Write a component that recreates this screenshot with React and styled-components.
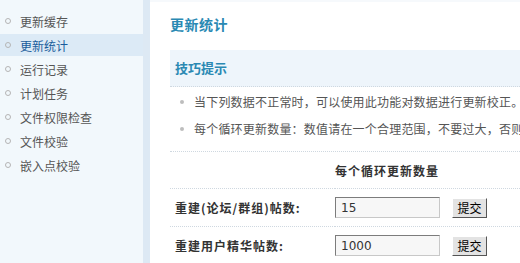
import React from 'react';
import styled, { createGlobalStyle } from 'styled-components';

const Global = createGlobalStyle`
  html, body {
    margin: 0;
    padding: 0;
    background: #fff;
    overflow: hidden;
  }
  body {
    font-family: "Noto Sans CJK SC", "DejaVu Sans", sans-serif;
    font-size: 12px;
    color: #555;
  }
`;

const Page = styled.div`
  display: flex;
  height: 263px;
  width: 520px;
  overflow: hidden;
`;

const Sidebar = styled.ul`
  flex: 0 0 143px;
  margin: 0;
  padding: 10px 0 0;
  list-style: none;
  background: #f2f8fc;
  border-right: 7px solid #dde9f4;
`;

const NavItem = styled.li`
  display: flex;
  align-items: center;
  height: 22px;
  margin-bottom: 2px;
  padding-left: 5px;
  background: ${p => (p.$active ? '#dceaf6' : 'transparent')};
  color: ${p => (p.$active ? '#1a5c9c' : '#555')};
  white-space: nowrap;

  &::before {
    content: '';
    width: 4px;
    height: 4px;
    border: 1px solid #b5b5b5;
    border-radius: 50%;
    margin-right: 9px;
  }
`;

const Main = styled.div`
  flex: 0 0 auto;
  width: 640px;
  padding: 14px 0 0 20px;
  background: #fff;
  border-top: 2px solid #f6f9fc;
`;

const Title = styled.h1`
  margin: -2px 0 16px;
  height: 20px;
  line-height: 20px;
  font-size: 14px;
  font-weight: bold;
  letter-spacing: 0.5px;
  color: #2a89b3;
`;

const TipsHead = styled.div`
  height: 36px;
  line-height: 36px;
  padding-left: 5px;
  background: #eef5fb;
  border-bottom: 1px dotted #cfd8e0;
  font-size: 13px;
  font-weight: bold;
  color: #2a89b3;
`;

const TipList = styled.ul`
  margin: 0;
  padding: 1px 0 9px;
  list-style: none;
  border-bottom: 1px dotted #cfd8e0;
`;

const Tip = styled.li`
  display: flex;
  align-items: center;
  height: 27px;
  padding-left: 10px;
  white-space: nowrap;
  letter-spacing: 0.2px;
  color: #555;

  &::before {
    content: '';
    width: 4px;
    height: 4px;
    border-radius: 50%;
    background: #bdbdbd;
    margin-right: 10px;
  }
`;

const Grid = styled.div`
  display: grid;
  grid-template-columns: 165px 1fr;
`;

const Row = styled.div`
  display: contents;
`;

const Cell = styled.div`
  display: flex;
  align-items: center;
  height: ${p => (p.$head ? '36px' : '37px')};
  padding-left: ${p => (p.$label ? '5px' : '0')};
  border-bottom: 1px dotted #cfd8e0;
  font-weight: ${p => (p.$label || p.$head ? 'bold' : 'normal')};
  letter-spacing: ${p => (p.$label || p.$head ? '1px' : '0')};
  color: #333;
  white-space: nowrap;
`;

const Input = styled.input`
  box-sizing: border-box;
  width: 105px;
  height: 21px;
  padding: 0 5px;
  border: 1px solid;
  border-color: #7c7c7c #c8c8c8 #c8c8c8 #7c7c7c;
  background: #f7f7f7;
  font-family: "DejaVu Sans", sans-serif;
  font-size: 12px;
  letter-spacing: 0;
  color: #333;
  outline: none;
`;

const Button = styled.button`
  box-sizing: border-box;
  width: 35px;
  height: 20px;
  margin-left: 12px;
  padding: 0;
  border: 1px solid;
  border-color: #fff #555 #555 #fff;
  background: #e3e3e3;
  font-family: "Noto Sans CJK SC", sans-serif;
  font-size: 12px;
  letter-spacing: 0;
  color: #000;
`;

const nav = ['更新缓存', '更新统计', '运行记录', '计划任务', '文件权限检查', '文件校验', '嵌入点校验'];

const rows = [
  { label: '重建(论坛/群组)帖数:', value: '15' },
  { label: '重建用户精华帖数:', value: '1000' },
];

export default function App() {
  return (
    <Page>
      <Global />
      <Sidebar>
        {nav.map(n => (
          <NavItem key={n} $active={n === '更新统计'}>{n}</NavItem>
        ))}
      </Sidebar>
      <Main>
        <Title>更新统计</Title>
        <TipsHead>技巧提示</TipsHead>
        <TipList>
          <Tip>当下列数据不正常时，可以使用此功能对数据进行更新校正。请勿在访问高峰时段使用。</Tip>
          <Tip>每个循环更新数量：数值请在一个合理范围，不要过大，否则会给服务器带来较大负担。</Tip>
        </TipList>
        <Grid>
          <Row>
            <Cell $head />
            <Cell $head>每个循环更新数量</Cell>
          </Row>
          {rows.map(r => (
            <Row key={r.label}>
              <Cell $label>{r.label}</Cell>
              <Cell>
                <Input defaultValue={r.value} />
                <Button>提交</Button>
              </Cell>
            </Row>
          ))}
        </Grid>
      </Main>
    </Page>
  );
}
